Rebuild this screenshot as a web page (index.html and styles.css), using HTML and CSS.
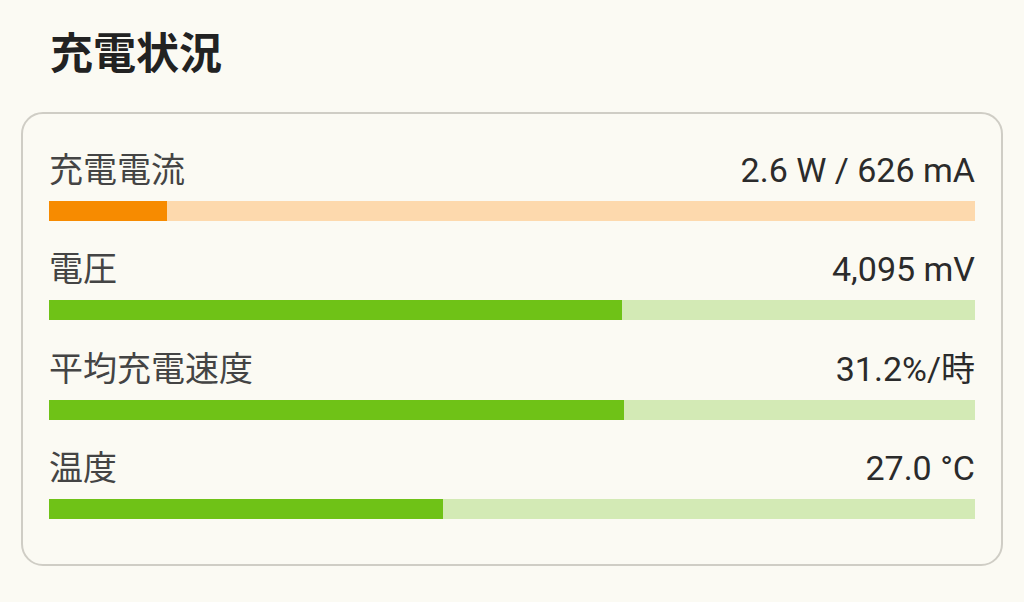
FILE: index.html
```html
<!DOCTYPE html>
<html lang="ja">
<head>
  <meta charset="UTF-8" />
  <meta name="viewport" content="width=device-width, initial-scale=1" />
  <title>充電状況</title>
  <link rel="stylesheet" href="styles.css">
</head>
<body>

  <div class="page">
    <h1 class="title">充電状況</h1>

    <!-- Charging stats -->
    <div class="card">
      <div class="stat">
        <div class="stat-head">
          <span class="stat-label">充電電流</span>
          <span class="stat-value">2.6 W / 626 mA</span>
        </div>
        <div class="bar bar-orange"><div class="bar-fill" style="width:12.7%"></div></div>
      </div>

      <div class="stat">
        <div class="stat-head">
          <span class="stat-label">電圧</span>
          <span class="stat-value">4,095 mV</span>
        </div>
        <div class="bar bar-green"><div class="bar-fill" style="width:61.9%"></div></div>
      </div>

      <div class="stat">
        <div class="stat-head">
          <span class="stat-label">平均充電速度</span>
          <span class="stat-value">31.2%/時</span>
        </div>
        <div class="bar bar-green"><div class="bar-fill" style="width:62.1%"></div></div>
      </div>

      <div class="stat">
        <div class="stat-head">
          <span class="stat-label">温度</span>
          <span class="stat-value">27.0 °C</span>
        </div>
        <div class="bar bar-green"><div class="bar-fill" style="width:42.6%"></div></div>
      </div>
    </div>
  </div>

</body>
</html>
```

FILE: styles.css
```css
body {
  margin: 0;
  background: #fbfaf3;
  font-family: Roboto, "Noto Sans CJK JP", sans-serif;
  color: #333;
}
.page {
  padding: 26px 21px 0;
}
.title {
  margin: 0 0 30px 29px;
  font-size: 43px;
  line-height: 56px;
  font-weight: 700;
  color: #222;
}
.card {
  border: 2px solid #cfcdc5;
  border-radius: 22px;
  padding: 36px 26px 45px;
  display: flex;
  flex-direction: column;
  gap: 28.3px;
}
.stat {
  display: flex;
  flex-direction: column;
  gap: 11px;
}
.stat-head {
  display: flex;
  justify-content: space-between;
  align-items: baseline;
  height: 40px;
  line-height: 40px;
  font-size: 34px;
}
.stat-label {
  color: #444;
}
.stat-value {
  color: #2b2b2b;
}
.bar {
  height: 20px;
  display: flex;
}
.bar-fill {
  height: 100%;
}
.bar-orange {
  background: #fdd9ad;
}
.bar-orange .bar-fill {
  background: #f78b00;
}
.bar-green {
  background: #d3eab5;
}
.bar-green .bar-fill {
  background: #6fc217;
}
```
